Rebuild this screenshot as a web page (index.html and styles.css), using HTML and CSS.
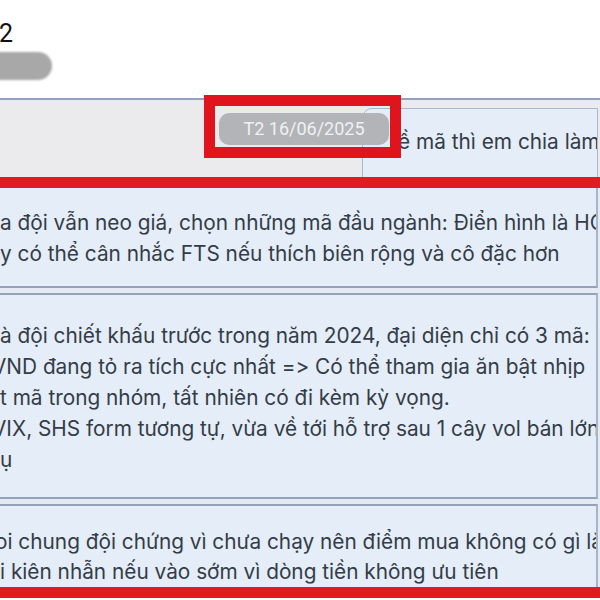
FILE: index.html
```html
<!DOCTYPE html>
<html>
<head>
  <title>Tin nhắn nhóm</title>
  <link rel="stylesheet" href="styles.css">
</head>
<body>
  <div class="screen">
    <div class="top">
      <div class="name">2</div>
      <div class="blur-pill"></div>
    </div>

    <div class="thread">
      <div class="head-row">
        <div class="bubble head-bubble">
          <div class="ln">ề mã thì em chia làm 3 nhóm</div>
        </div>
        <div class="date-note">
          <span class="date-pill">T2 16/06/2025</span>
        </div>
      </div>

      <div class="red-rule"></div>

      <div class="bubble first">
        <div class="ln">a đội vẫn neo giá, chọn những mã đầu ngành: Điển hình là HCM</div>
        <div class="ln">y có thể cân nhắc FTS nếu thích biên rộng và cô đặc hơn</div>
      </div>

      <div class="bubble">
        <div class="ln">à đội chiết khấu trước trong năm 2024, đại diện chỉ có 3 mã: VIX</div>
        <div class="ln"><span class="cut-v">V</span>ND đang tỏ ra tích cực nhất =&gt; Có thể tham gia ăn bật nhịp</div>
        <div class="ln">t mã trong nhóm, tất nhiên có đi kèm kỳ vọng.</div>
        <div class="ln"><span class="cut-v">V</span>IX, SHS form tương tự, vừa về tới hỗ trợ sau 1 cây vol bán lớn</div>
        <div class="ln">ụ</div>
      </div>

      <div class="bubble last">
        <div class="ln"><span class="cut-o">o</span>i chung đội chứng vì chưa chạy nên điểm mua không có gì là</div>
        <div class="ln">i kiên nhẫn nếu vào sớm vì dòng tiền không ưu tiên</div>
      </div>

      <div class="red-rule"></div>
    </div>
  </div>
</body>
</html>
```

FILE: styles.css
```css
body {
  margin: 0;
  font-family: Inter, Roboto, "Liberation Sans", sans-serif;
  background-color: #ffffff;
}

.screen {
  width: 600px;
  height: 600px;
  overflow: hidden;
}

/* sender name area */
.top {
  height: 98px;
  background-color: #ffffff;
  padding-top: 19px;
  box-sizing: border-box;
}

.top .name {
  font-family: Roboto, sans-serif;
  font-size: 25px;
  line-height: 30px;
  color: #111111;
  margin-left: -1px;
}

.top .blur-pill {
  width: 72px;
  height: 28px;
  margin-top: 3px;
  margin-left: -20px;
  border-radius: 14px;
  background-color: #a8a8a8;
  filter: blur(1px);
}

.thread {
  background-color: #e4ebf5;
}

.head-row {
  position: relative;
  height: 79px;
  border-top: 2px solid #8fa2c2;
  background-color: #ebebee;
  padding-top: 8px;
  box-sizing: border-box;
}

.bubble {
  margin-left: -20px;
  width: 618px;
  background-color: #e5edf8;
  border-top: 2px solid #95a3ba;
  border-bottom: 2px solid #95a3ba;
  border-right: 2px solid #a7b5ca;
  box-sizing: border-box;
  overflow: hidden;
  color: #333c47;
  font-size: 20.8px;
  font-feature-settings: "calt" 0, "liga" 0;
  line-height: 31px;
  padding: 25px 0 22px 20px;
  margin-bottom: 5px;
}

.bubble .ln {
  white-space: nowrap;
}

.head-bubble {
  margin-left: 362px;
  width: 236px;
  height: 80px;
  border: 1px solid #a9b9d2;
  border-radius: 10px 0 0 0;
  padding: 17px 0 0 35px;
}

.bubble.first {
  border-top: none;
  padding-top: 19px;
  padding-bottom: 17px;
}

.bubble.last {
  border-bottom: none;
  margin-bottom: 0;
  line-height: 30px;
  padding-top: 21px;
  padding-bottom: 0;
}

.cut-v {
  margin-left: -8px;
}

.cut-o {
  margin-left: -5px;
}

.red-rule {
  position: relative;
  height: 11px;
  background-color: #e21b23;
}

/* highlighted date marker drawn over the chat */
.date-note {
  position: absolute;
  left: 204px;
  top: -5px;
  width: 197px;
  height: 63px;
  border: 11px solid #e0141c;
  box-sizing: border-box;
  padding: 7px 0 0 4px;
}

.date-pill {
  display: block;
  width: 170px;
  height: 32px;
  border-radius: 10px;
  background-color: #b2b4b8;
  color: #eff1f3;
  font-family: Roboto, sans-serif;
  font-size: 18px;
  line-height: 32px;
  text-align: center;
}
```
